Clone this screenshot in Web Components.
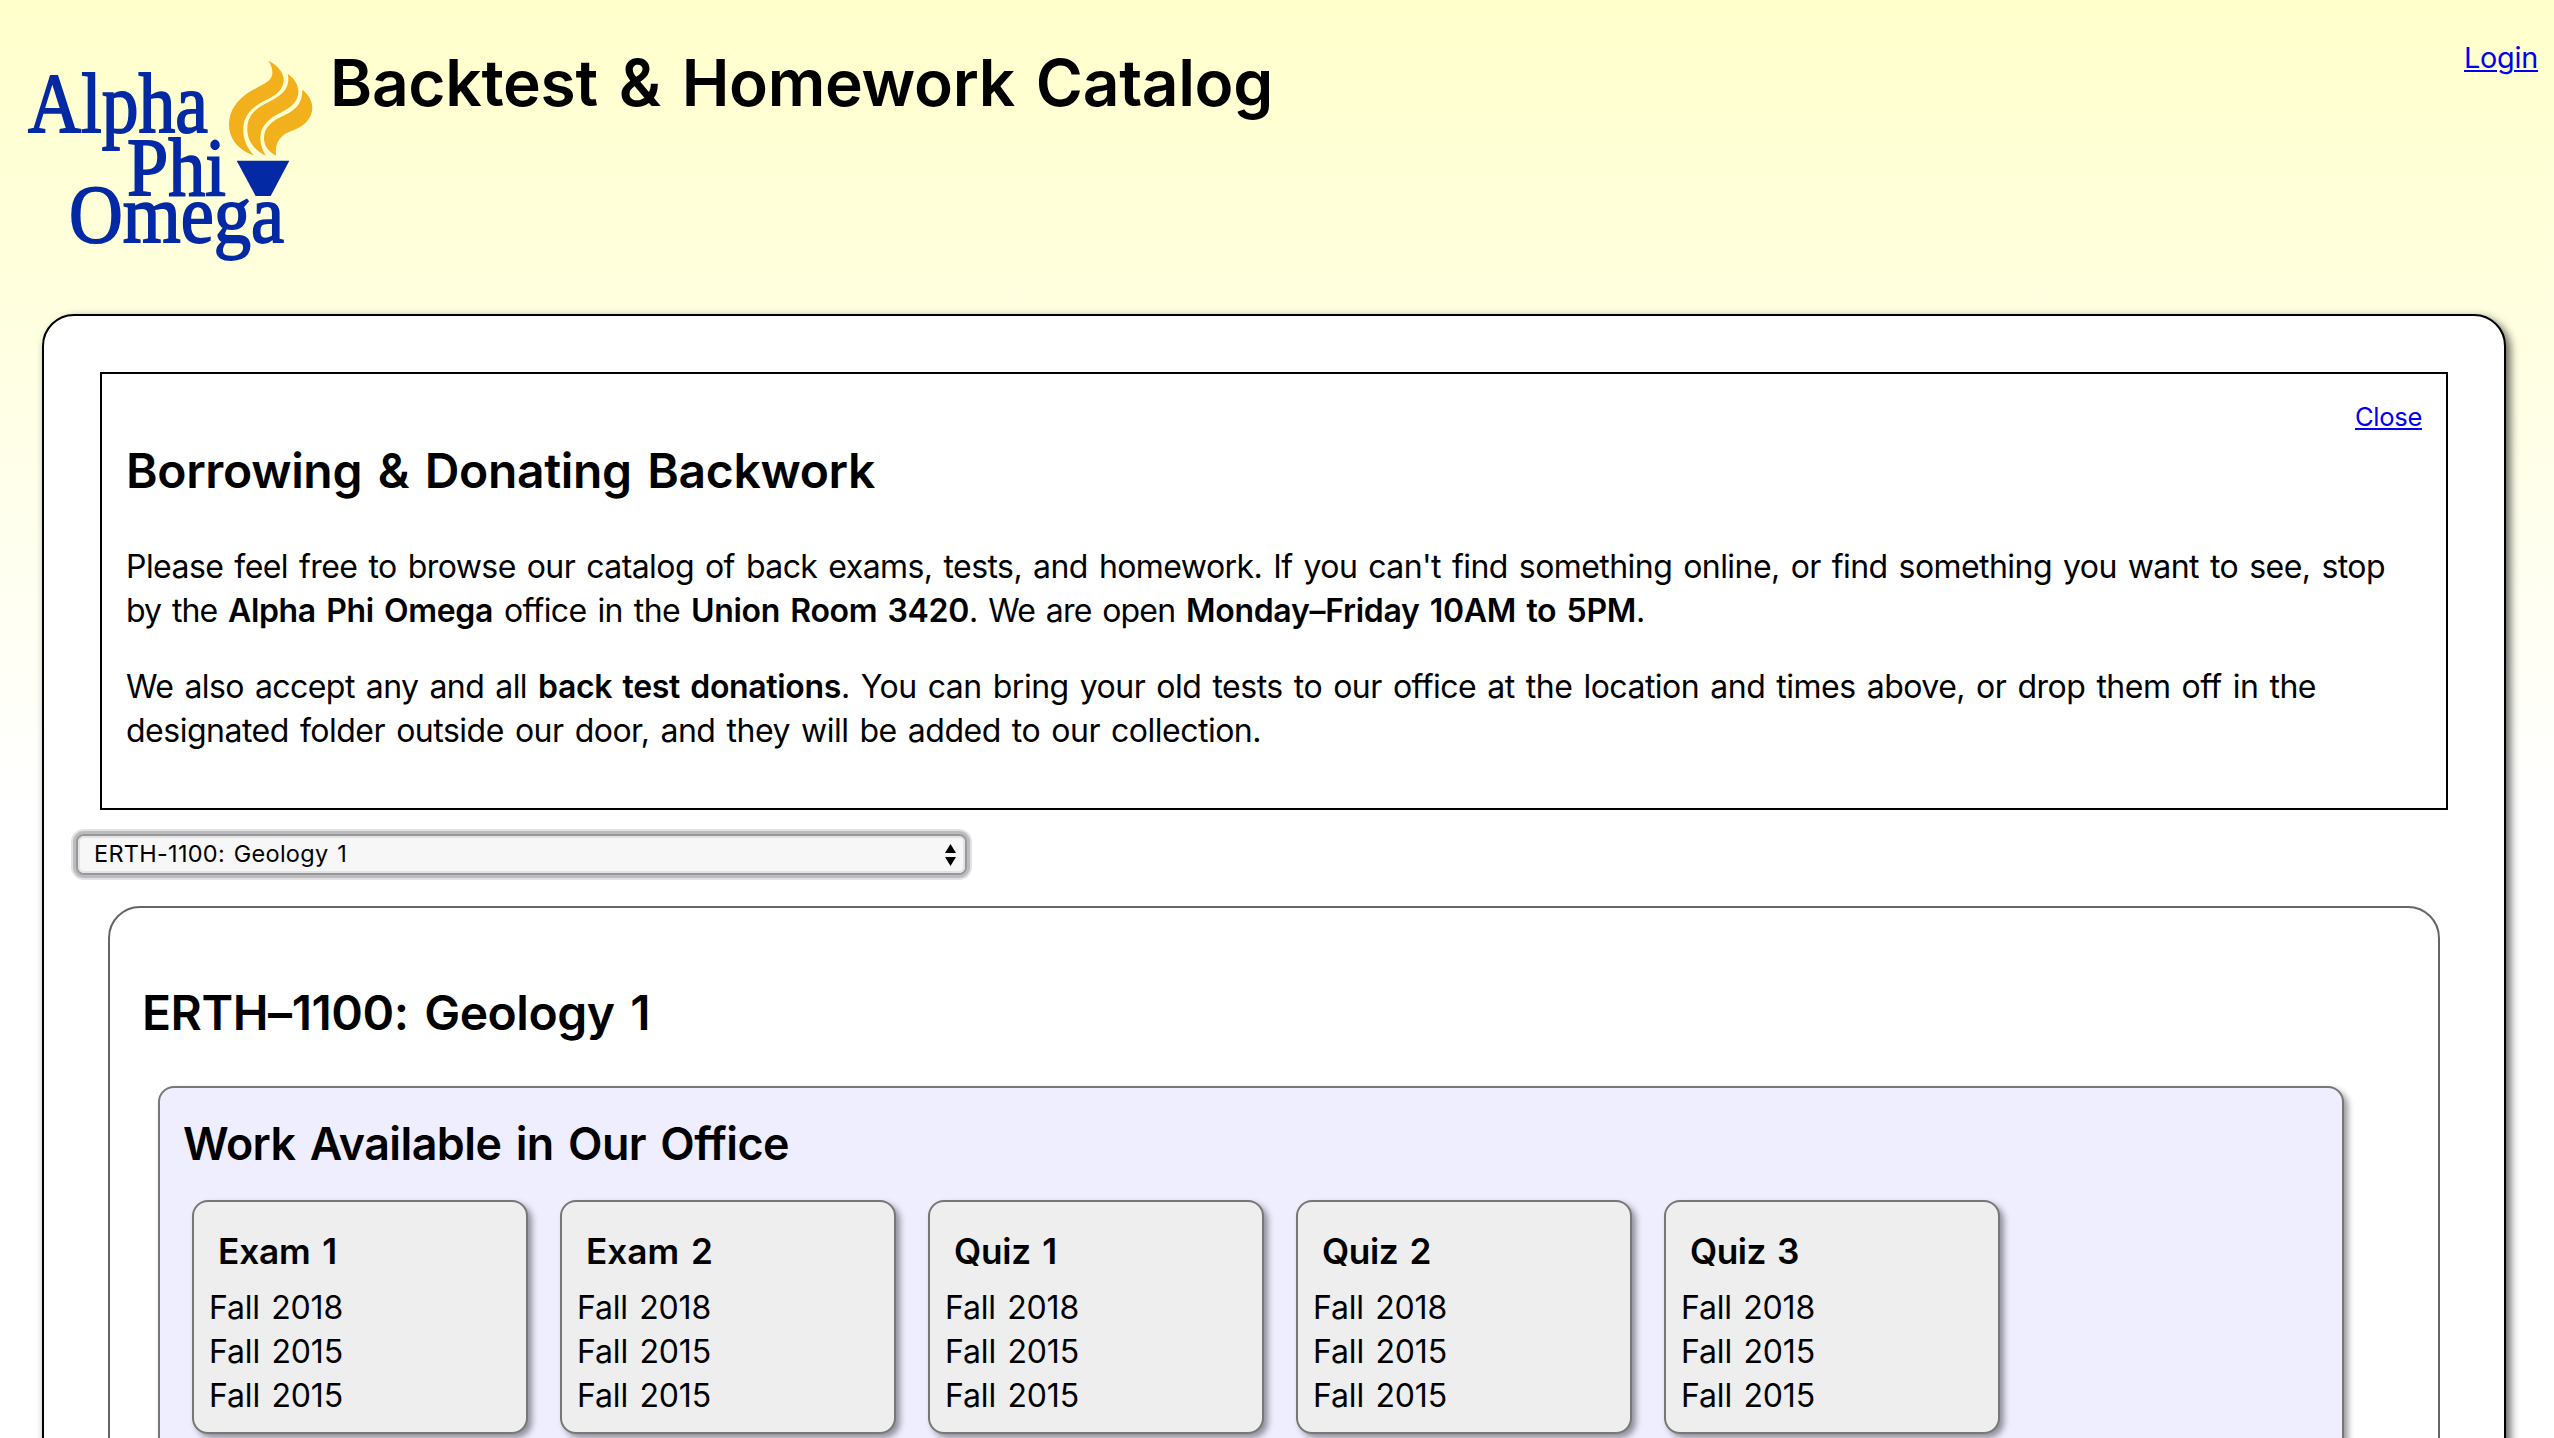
<!DOCTYPE html>
<html lang="en">
<head>
<meta charset="utf-8">
<title>Backtest &amp; Homework Catalog</title>
<style>
html,body{margin:0;height:1438px;overflow:hidden}
body{background:#fff linear-gradient(#ffffcc,#ffffff 800px) no-repeat;color:#000;font:32px/44px Inter,"Liberation Sans",sans-serif}
</style>
</head>
<body>
<catalog-app></catalog-app>
<script>
const define = (name, html, ready) => customElements.define(name, class extends HTMLElement {
  connectedCallback() {
    if (this.shadowRoot) return;
    const root = this.attachShadow({mode: 'open'});
    const t = document.createElement('template');
    t.innerHTML = html;
    root.append(t.content.cloneNode(true));
    if (ready) ready(this, root);
  }
});

// A run of text tracked so that it fills a given width.
define('text-run', `<style>:host{display:block;white-space:pre;flex:none;word-spacing:.08em}:host([bold]){font-weight:600}span{display:inline-block}
:host([link]) span{text-decoration:underline;text-decoration-thickness:2px;text-underline-offset:2px}</style><span><slot></slot></span>`,
  (el, root) => {
    const span = root.querySelector('span'), w = +el.getAttribute('w');
    if (!w) return;
    const n = el.textContent.length;
    span.style.letterSpacing = ((w - span.getBoundingClientRect().width) / n) + 'px';
    el.style.width = w + 'px';
  });

define('apo-logo', `<style>:host{display:block;flex:none;width:330px;height:250px;margin-top:30px}svg{display:block;overflow:visible}
text{font-family:"Liberation Serif",serif;fill:#0329a5;stroke:#0329a5;stroke-width:1.8px}</style>
<svg width="329" height="250" viewBox="0 0 329 250">
<text x="28" y="101.5" font-size="85" textLength="180" lengthAdjust="spacingAndGlyphs">Alpha</text>
<text x="127" y="165" font-size="83" textLength="99" lengthAdjust="spacingAndGlyphs">Phi</text>
<text x="69" y="211.5" font-size="83" textLength="215" lengthAdjust="spacingAndGlyphs">Omega</text>
<g transform="translate(220 20) scale(.33333)">
<g fill="#f1b01c">
<path d="M145 32C170 44 192 66 191 90C190 116 172 134 143 148C105 166 73 188 70 232C68 265 80 293 102 316C62 304 28 272 27 226C26 180 54 148 88 126C126 104 156 96 157 70C158 56 153 43 145 32Z"/>
<path d="M203 71C222 84 236 104 235 127C234 154 214 172 186 186C148 204 122 226 121 262C121 284 128 302 138 317C104 300 82 275 82 237C82 198 106 174 146 156C184 138 204 118 205 91C205 83 205 77 203 71Z"/>
<path d="M247 119C264 132 277 152 277 174C276 204 254 228 222 240C184 252 164 272 168 317C145 304 132 288 132 264C132 232 156 212 194 195C230 178 247 158 247 119Z"/>
</g>
<path d="M50 332H208L152 438H107Z" fill="#0329a5"/>
</g></svg>`);

define('page-header', `<style>:host{display:flex;align-items:flex-start;height:314px}
h1{margin:43.7px 0 0;font-size:64px;line-height:78px;font-weight:560}
a{margin:39.8px 16px 0 auto;font-size:28.8px;line-height:36px;color:#00e;text-decoration:none}</style>
<apo-logo></apo-logo><h1><text-run w="943">Backtest &amp; Homework Catalog</text-run></h1><a href="#"><text-run link w="74">Login</text-run></a>`);

define('info-box', `<style>:host{display:block;box-sizing:border-box;height:438px;border:2px solid #000;padding:27.5px 24px 0}
.close{display:flex;justify-content:flex-end;font-size:25.6px;line-height:30px}
a{color:#00e;text-decoration:none}
h2{margin:10px 0 45.5px;font-size:48px;line-height:58px;font-weight:560}
.line{display:flex}.p{margin-bottom:32px}</style>
<div class="close"><a href="#"><text-run link w="67">Close</text-run></a></div>
<h2><text-run w="749">Borrowing &amp; Donating Backwork</text-run></h2>
<div class="p"><div class="line"><text-run w="2259">Please feel free to browse our catalog of back exams, tests, and homework. If you can't find something online, or find something you want to see, stop</text-run></div>
<div class="line"><text-run w="102">by the </text-run><text-run bold w="265">Alpha Phi Omega</text-run><text-run w="198"> office in the </text-run><text-run bold w="278">Union Room 3420</text-run><text-run w="217">. We are open </text-run><text-run bold w="450">Monday–Friday 10AM to 5PM</text-run><text-run>.</text-run></div></div>
<div class="p"><div class="line"><text-run w="412">We also accept any and all </text-run><text-run bold w="303">back test donations</text-run><text-run w="1475">. You can bring your old tests to our office at the location and times above, or drop them off in the</text-run></div>
<div class="line"><text-run w="1135">designated folder outside our door, and they will be added to our collection.</text-run></div></div>`);

define('course-select', `<style>:host{display:flex;align-items:center;justify-content:space-between;box-sizing:border-box;width:887px;height:37px;margin:26px 0 0 -22px;padding:0 9px 0 16px;border-radius:6px;background:#f7f7f7;
box-shadow:inset 0 0 0 2px #e3e3e4,0 0 0 2px #98989c,0 0 0 5px #bcbcbf,0 0 0 7px #e2e2e5;font-size:23.5px;line-height:36px}
text-run{margin-top:-2px}svg{display:block}</style>
<text-run w="253">ERTH-1100: Geology 1</text-run>
<svg width="11" height="22" viewBox="0 0 11 22"><path d="M5.5 0L11 9H0ZM0 13H11L5.5 22Z"/></svg>`);

define('work-card', `<style>:host{display:block;box-sizing:border-box;width:336px;height:234px;flex:none;border:2px solid #777;border-radius:16px;background:#eee;padding:27.2px 0 0 15px;box-shadow:4px 4px 6px rgba(0,0,0,.4)}
h3{margin:0 0 12.4px 9px;font-size:35.2px;line-height:44px;font-weight:600}</style>
<h3><slot></slot></h3><text-run w="134">Fall 2018</text-run><text-run w="134">Fall 2015</text-run><text-run w="134">Fall 2015</text-run>`);

define('office-work', `<style>:host{display:block;box-sizing:border-box;width:2186px;height:700px;border:2px solid #777;border-radius:16px;background:#eeeeff;padding:28.7px 32px 0;box-shadow:4px 4px 6px rgba(0,0,0,.4)}
h2{margin:0 0 29.3px -9px;font-size:44.8px;line-height:54px;font-weight:560}
.cards{display:flex;gap:32px}</style>
<h2><text-run w="606">Work Available in Our Office</text-run></h2>
<div class="cards"><work-card><text-run w="119">Exam 1</text-run></work-card><work-card><text-run w="127">Exam 2</text-run></work-card><work-card><text-run w="103">Quiz 1</text-run></work-card><work-card><text-run w="109">Quiz 2</text-run></work-card><work-card><text-run w="109">Quiz 3</text-run></work-card></div>`);

define('course-panel', `<style>:host{display:block;box-sizing:border-box;height:900px;margin:33px 8px 0;border:2px solid #666;border-radius:32px;padding:75.5px 0 0 48px}
h2{margin:0 0 44.5px -16px;font-size:48px;line-height:58px;font-weight:560}</style>
<h2><text-run w="508">ERTH–1100: Geology 1</text-run></h2><office-work></office-work>`);

define('main-sheet', `<style>:host{display:block;box-sizing:border-box;width:2464px;height:1500px;margin-left:42px;border:2px solid #000;border-radius:32px;background:#fff;padding:56px;box-shadow:4px 4px 10px rgba(0,0,0,.65)}</style><slot></slot>`);

define('catalog-app', `<style>:host{display:block;height:1438px;overflow:hidden}</style><page-header></page-header>
<main-sheet><info-box></info-box><course-select></course-select><course-panel></course-panel></main-sheet>`);
</script>
</body>
</html>
